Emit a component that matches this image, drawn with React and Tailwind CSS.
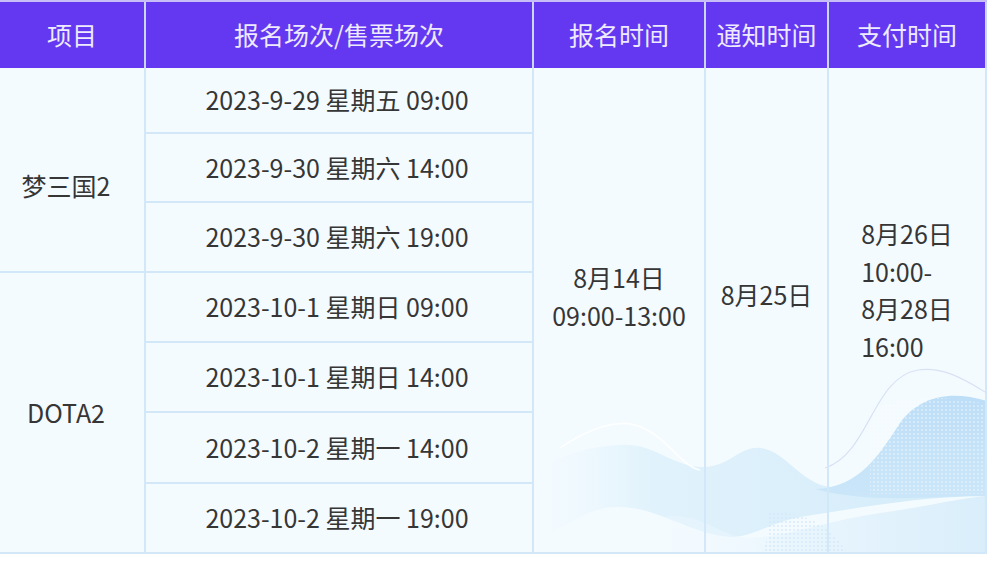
import React from "react";

const sessions = [
  "2023-9-29 星期五 09:00",
  "2023-9-30 星期六 14:00",
  "2023-9-30 星期六 19:00",
  "2023-10-1 星期日 09:00",
  "2023-10-1 星期日 14:00",
  "2023-10-2 星期一 14:00",
  "2023-10-2 星期一 19:00",
];

const rowStart = [
  "row-start-1",
  "row-start-2",
  "row-start-3",
  "row-start-4",
  "row-start-5",
  "row-start-6",
  "row-start-7",
];

function Wave() {
  return (
    <svg
      className="absolute inset-0 pointer-events-none"
      width="987"
      height="486"
      viewBox="0 0 987 486"
    >
      <defs>
        <linearGradient id="band" x1="0" y1="0" x2="1" y2="0">
          <stop offset="0" stopColor="#e3f3fc" stopOpacity="0" />
          <stop offset="0.25" stopColor="#dcf0fb" stopOpacity="0.8" />
          <stop offset="1" stopColor="#d2ebf9" stopOpacity="1" />
        </linearGradient>
        <linearGradient id="dark" x1="0" y1="0" x2="0" y2="1">
          <stop offset="0" stopColor="#bddef7" />
          <stop offset="1" stopColor="#cbe6f9" />
        </linearGradient>
        <linearGradient id="low" x1="0" y1="0" x2="1" y2="0">
          <stop offset="0" stopColor="#f7fcff" stopOpacity="0" />
          <stop offset="0.5" stopColor="#e6f4fd" stopOpacity="0.9" />
          <stop offset="1" stopColor="#d4ebfa" stopOpacity="1" />
        </linearGradient>
        <pattern id="dots" width="4" height="4" patternUnits="userSpaceOnUse">
          <circle cx="2" cy="2" r="0.9" fill="#ffffff" fillOpacity="0.5" />
        </pattern>
        <pattern id="dots2" width="4" height="4" patternUnits="userSpaceOnUse">
          <circle cx="2" cy="2" r="0.9" fill="#d3e8f8" />
        </pattern>
      </defs>
      {/* light band */}
      <path
        d="M 540 400 C 570 385, 590 378, 620 377 C 655 374, 672 400, 705 399 C 730 398, 740 378, 760 380 C 785 382, 800 415, 830 419 L 987 419 L 987 428 C 920 428, 860 440, 800 449 C 770 455, 750 470, 730 469 C 690 466, 660 440, 620 439 C 590 438, 570 455, 545 470 Z"
        fill="url(#band)"
      />
      {/* lower lighter sweep */}
      <path
        d="M 600 486 C 640 470, 650 445, 680 448 C 710 452, 725 470, 750 470 C 790 468, 830 452, 880 445 C 930 438, 960 430, 987 428 L 987 486 Z"
        fill="url(#low)"
        opacity="0.85"
      />
      {/* dark right shape */}
      <path
        d="M 815 421 C 860 420, 880 385, 900 355 C 920 328, 950 322, 987 333 L 987 428 C 930 428, 870 436, 815 421 Z"
        fill="url(#dark)"
      />
      <path
        d="M 870 345 C 890 330, 930 325, 987 336 L 987 426 L 870 426 Z"
        fill="url(#dots)"
      />
      <path
        d="M 768 445 C 800 442, 830 455, 848 486 L 760 486 C 772 470, 766 456, 768 445 Z"
        fill="url(#dots2)"
        opacity="0.9"
      />
      {/* thin curve lines */}
      <path
        d="M 825 400 C 870 385, 872 310, 918 302 C 945 298, 968 314, 987 325"
        fill="none"
        stroke="#d8e2f4"
        strokeWidth="1.2"
      />
      <path
        d="M 560 380 C 590 360, 615 352, 635 357 C 665 365, 680 398, 700 402"
        fill="none"
        stroke="#ffffff"
        strokeWidth="1.5"
        opacity="0.9"
      />
    </svg>
  );
}

export default function App() {
  const cellB = "border-r-2 border-b-2 border-[#d2e7f8]";
  return (
    <div
      className="w-[995px] h-[563px] bg-white overflow-hidden"
      style={{ fontFamily: "'Noto Sans CJK SC', 'Noto Sans', sans-serif" }}
    >
      <div className="w-[987px] border-t-2 border-[#c7bdf7]">
        {/* header */}
        <div className="grid grid-cols-[146px_388px_172px_123px_158px] h-[66px] bg-[#6338f0] text-[#eeeaff] text-[25px]">
          {["项目", "报名场次/售票场次", "报名时间", "通知时间", "支付时间"].map(
            (t, i) => (
              <div
                key={i}
                className="flex items-center justify-center border-r-2 border-[#c9d6f6]"
              >
                {t}
              </div>
            )
          )}
        </div>
        {/* body */}
        <div className="relative bg-[#f4fbff]">
          <Wave />
          <div className="relative grid grid-cols-[146px_388px_172px_123px_158px] grid-rows-[66px_69px_70px_70px_70px_71px_70px] text-[25px] text-[#363636]">
            <div
              className={`col-start-1 row-start-1 row-span-3 flex items-center justify-center pt-8 pr-3 ${cellB}`}
            >
              梦三国2
            </div>
            <div
              className={`col-start-1 row-start-4 row-span-4 flex items-center justify-center pr-3 ${cellB}`}
            >
              DOTA2
            </div>
            {sessions.map((s, i) => (
              <div
                key={i}
                className={`col-start-2 ${rowStart[i]} flex items-center justify-center pr-1 ${cellB}`}
              >
                {s}
              </div>
            ))}
            <div
              className={`col-start-3 row-start-1 row-span-7 flex items-center justify-center pb-[28px] leading-[38px] text-center ${cellB}`}
            >
              <div>
                8月14日
                <br />
                09:00-13:00
              </div>
            </div>
            <div
              className={`col-start-4 row-start-1 row-span-7 flex items-center justify-center pb-[30px] ${cellB}`}
            >
              8月25日
            </div>
            <div
              className={`col-start-5 row-start-1 row-span-7 flex items-center justify-center pb-[40px] leading-[37.5px] ${cellB}`}
            >
              <div className="text-left">
                8月26日
                <br />
                10:00-
                <br />
                8月28日
                <br />
                16:00
              </div>
            </div>
          </div>
        </div>
      </div>
    </div>
  );
}
